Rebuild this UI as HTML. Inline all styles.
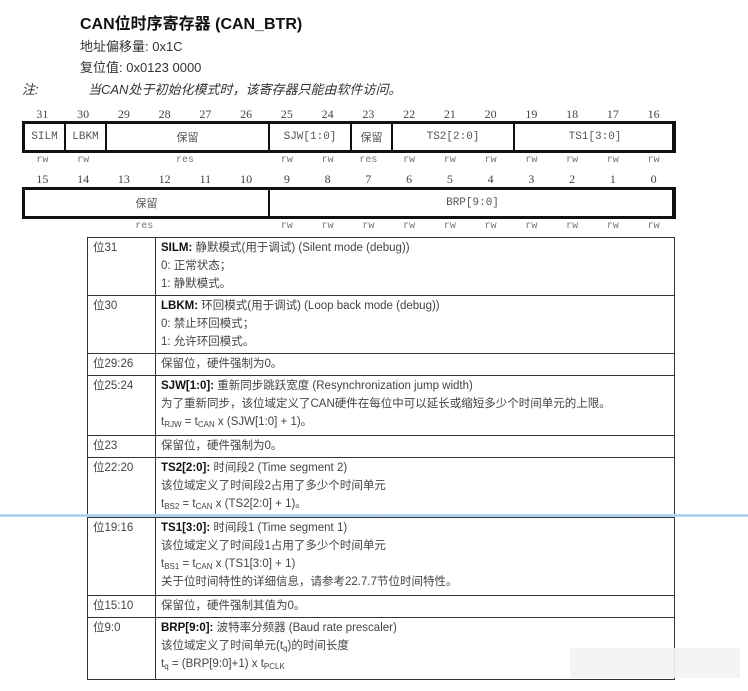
<!DOCTYPE html>
<html><head><meta charset="utf-8"><style>
*{margin:0;padding:0;box-sizing:border-box}
body{width:748px;height:691px;background:#fff;position:relative;overflow:hidden;font-family:"Liberation Sans","Noto Sans CJK SC",sans-serif;color:#333}
.a{position:absolute;white-space:nowrap}
.n{position:absolute;width:40.75px;text-align:center;font-size:12px;font-family:"Liberation Serif",serif;color:#444}
.rw{position:absolute;width:40.75px;text-align:center;font-size:10px;font-family:"Liberation Mono",monospace;color:#777}
.box{position:absolute;border:3px solid #111;border-width:3px 4px 3px 3px}
.c{position:absolute;top:0;bottom:0;border-right:2px solid #111;display:flex;align-items:center;justify-content:center;font-size:11px;font-family:"Liberation Mono","Noto Sans CJK SC",monospace;color:#555}
table{position:absolute;left:87px;top:237px;width:588px;border-collapse:collapse;font-size:11.5px}
td{border:1.5px solid #333;vertical-align:top;padding:1px 5px;line-height:18px;color:#444;overflow:hidden}
td:first-child{width:68px}
b{color:#111}
sub{font-size:8px;vertical-align:-2px;line-height:0}
</style></head><body>
<div class="a" style="left:80px;top:10px;font-size:16px;font-weight:bold;color:#111">CAN位时序寄存器 (CAN_BTR)</div>
<div class="a" style="left:80px;top:36px;font-size:13px;color:#333">地址偏移量: 0x1C</div>
<div class="a" style="left:80px;top:57px;font-size:13px;color:#333">复位值: 0x0123 0000</div>
<div class="a" style="left:22px;top:79px;font-size:13px;font-style:italic;color:#333">注:</div>
<div class="a" style="left:88px;top:79px;font-size:13px;font-style:italic;color:#333">当CAN处于初始化模式时，该寄存器只能由软件访问。</div>

<div id="nums"></div>
<div class="box" style="left:22px;top:121px;width:654px;height:32px">
 <div class="c" style="left:0;width:41px">SILM</div>
 <div class="c" style="left:41px;width:41px">LBKM</div>
 <div class="c" style="left:82px;width:163px">保留</div>
 <div class="c" style="left:245px;width:82px">SJW[1:0]</div>
 <div class="c" style="left:327px;width:41px">保留</div>
 <div class="c" style="left:368px;width:122px">TS2[2:0]</div>
 <div class="c" style="left:490px;width:160px;border:none">TS1[3:0]</div>
</div>
<div class="box" style="left:22px;top:187px;width:654px;height:32px">
 <div class="c" style="left:0;width:245px">保留</div>
 <div class="c" style="left:245px;width:405px;border:none">BRP[9:0]</div>
</div>
<script>
var h='',x0=22,w=40.75;
for(var i=0;i<16;i++){var x=x0+i*w;
h+='<div class="n" style="left:'+x+'px;top:107px">'+(31-i)+'</div>';
h+='<div class="n" style="left:'+x+'px;top:172px">'+(15-i)+'</div>';
var t=(i<2||i==6||i==7||i>8)?'rw':(i==8?'res':'');
h+='<div class="rw" style="left:'+x+'px;top:155px">'+t+'</div>';
var t2=i>=6?'rw':'';
h+='<div class="rw" style="left:'+x+'px;top:221px">'+t2+'</div>';}
h+='<div class="rw" style="left:'+(x0+3.5*w)+'px;top:155px">res</div>';
h+='<div class="rw" style="left:'+(x0+2.5*w)+'px;top:221px">res</div>';
document.getElementById('nums').innerHTML=h;
</script>

<table>
<tr><td style="height:58px">位31</td><td><b>SILM:</b> 静默模式(用于调试) (Silent mode (debug))<br>0: 正常状态；<br>1: 静默模式。</td></tr>
<tr><td style="height:58px">位30</td><td><b>LBKM:</b> 环回模式(用于调试) (Loop back mode (debug))<br>0: 禁止环回模式；<br>1: 允许环回模式。</td></tr>
<tr><td style="height:22px">位29:26</td><td>保留位，硬件强制为0。</td></tr>
<tr><td style="height:60px">位25:24</td><td><b>SJW[1:0]:</b> 重新同步跳跃宽度 (Resynchronization jump width)<br>为了重新同步，该位域定义了CAN硬件在每位中可以延长或缩短多少个时间单元的上限。<br>t<sub>RJW</sub> = t<sub>CAN</sub> x (SJW[1:0] + 1)。</td></tr>
<tr><td style="height:22px">位23</td><td>保留位，硬件强制为0。</td></tr>
<tr><td style="height:60px">位22:20</td><td><b>TS2[2:0]:</b> 时间段2 (Time segment 2)<br>该位域定义了时间段2占用了多少个时间单元<br>t<sub>BS2</sub> = t<sub>CAN</sub> x (TS2[2:0] + 1)。</td></tr>
<tr><td style="height:78px">位19:16</td><td><b>TS1[3:0]:</b> 时间段1 (Time segment 1)<br>该位域定义了时间段1占用了多少个时间单元<br>t<sub>BS1</sub> = t<sub>CAN</sub> x (TS1[3:0] + 1)<br>关于位时间特性的详细信息，请参考22.7.7节位时间特性。</td></tr>
<tr><td style="height:22px">位15:10</td><td>保留位，硬件强制其值为0。</td></tr>
<tr><td style="height:62px">位9:0</td><td><b>BRP[9:0]:</b> 波特率分频器 (Baud rate prescaler)<br>该位域定义了时间单元(t<sub>q</sub>)的时间长度<br>t<sub>q</sub> = (BRP[9:0]+1) x t<sub>PCLK</sub></td></tr>
</table>
<div class="a" style="left:0;top:514px;width:748px;height:3px;background:linear-gradient(#cfe3f5,#9cc6ea,#cfe3f5)"></div>
<div class="a" style="left:570px;top:648px;width:170px;height:30px;background:#f3f3f3;opacity:.9"></div>
</body></html>
